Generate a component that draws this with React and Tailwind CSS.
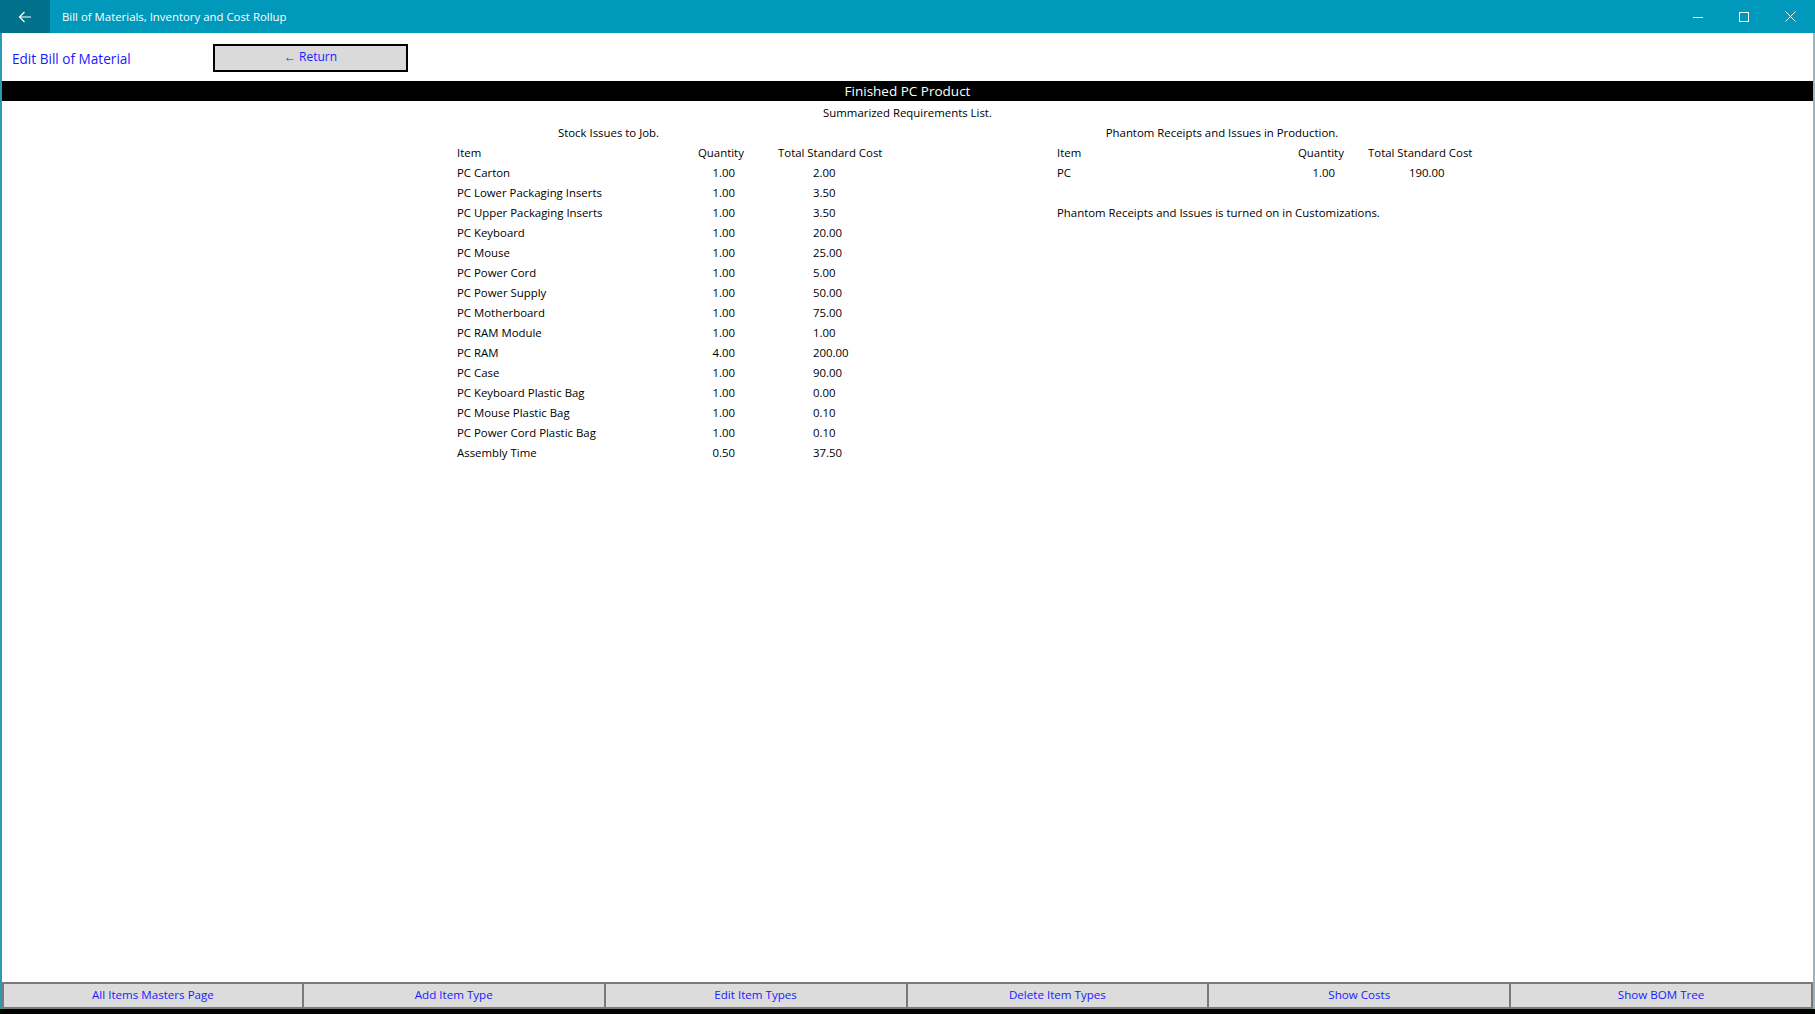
import React from 'react';

const stockIssues = [
  { item: 'PC Carton', qty: '1.00', cost: '2.00' },
  { item: 'PC Lower Packaging Inserts', qty: '1.00', cost: '3.50' },
  { item: 'PC Upper Packaging Inserts', qty: '1.00', cost: '3.50' },
  { item: 'PC Keyboard', qty: '1.00', cost: '20.00' },
  { item: 'PC Mouse', qty: '1.00', cost: '25.00' },
  { item: 'PC Power Cord', qty: '1.00', cost: '5.00' },
  { item: 'PC Power Supply', qty: '1.00', cost: '50.00' },
  { item: 'PC Motherboard', qty: '1.00', cost: '75.00' },
  { item: 'PC RAM Module', qty: '1.00', cost: '1.00' },
  { item: 'PC RAM', qty: '4.00', cost: '200.00' },
  { item: 'PC Case', qty: '1.00', cost: '90.00' },
  { item: 'PC Keyboard Plastic Bag', qty: '1.00', cost: '0.00' },
  { item: 'PC Mouse Plastic Bag', qty: '1.00', cost: '0.10' },
  { item: 'PC Power Cord Plastic Bag', qty: '1.00', cost: '0.10' },
  { item: 'Assembly Time', qty: '0.50', cost: '37.50' },
];

const phantoms = [{ item: 'PC', qty: '1.00', cost: '190.00' }];

const footerButtons = [
  'All Items Masters Page',
  'Add Item Type',
  'Edit Item Types',
  'Delete Item Types',
  'Show Costs',
  'Show BOM Tree',
];

// title bar with back button and window controls
const TitleBar = () => (
  <div className="h-[33px] bg-[#0099bc] flex items-center text-white shrink-0">
    <div className="w-[50px] h-full bg-[#00708b] flex items-center justify-center">
      <svg width="14" height="12" viewBox="0 0 14 12" fill="none" stroke="white" strokeWidth="1.2">
        <path d="M13 6H1.5M6.5 1L1.5 6l5 5" />
      </svg>
    </div>
    <span className="ml-[12px] text-[11.4px]">Bill of Materials, Inventory and Cost Rollup</span>
    <div className="ml-auto flex h-full pr-[2px]">
      <div className="w-[46px] h-full flex items-center justify-center">
        <svg width="10" height="10" viewBox="0 0 10 10" stroke="white" strokeWidth="1">
          <path d="M0 5.5h10" />
        </svg>
      </div>
      <div className="w-[46px] h-full flex items-center justify-center">
        <svg width="10" height="10" viewBox="0 0 10 10" fill="none" stroke="white" strokeWidth="1">
          <rect x="0.5" y="0.5" width="9" height="9" />
        </svg>
      </div>
      <div className="w-[46px] h-full flex items-center justify-center">
        <svg width="11" height="11" viewBox="0 0 11 11" stroke="white" strokeWidth="1">
          <path d="M0.5 0.5l10 10M10.5 0.5l-10 10" />
        </svg>
      </div>
    </div>
  </div>
);

const Row = ({ children, className = '' }) => (
  <div className={`h-[20px] flex items-center whitespace-nowrap ${className}`}>{children}</div>
);

export default function App() {
  return (
    <div className="w-[1815px] h-[1014px] flex flex-col bg-white font-['Open_Sans','Noto_Sans',sans-serif] overflow-hidden">
      <TitleBar />

      <div className="flex-1 flex flex-col border-l-2 border-r-2 border-l-[#2a9ab6] border-r-[#9fb3ba]">
        {/* Header */}
        <div className="h-[48px] flex items-start shrink-0">
          <div className="w-[211px] pl-[10px] pt-[13px]">
            <span className="text-[13.6px] text-[#1a1aff]">Edit Bill of Material</span>
          </div>
          <button className="mt-[11px] w-[195px] h-[28px] bg-[#dadada] border-2 border-black text-[12px] text-[#1a1aff] leading-none pb-[3px]">
            ← Return
          </button>
        </div>

        <div className="h-[20px] bg-black text-white text-[13.5px] flex items-center justify-center shrink-0 pt-[1px]">
          Finished PC Product
        </div>

        {/* Content */}
        <div className="flex-1 text-[11.4px] text-black pt-[2px]">
          <Row className="justify-center">Summarized Requirements List.</Row>

          <div className="flex">
            {/* Stock issues */}
            <div className="ml-[455px] w-[600px]">
              <Row className="w-[303px] justify-center">Stock Issues to Job.</Row>
              <Row>
                <span className="w-[241px]">Item</span>
                <span className="w-[80px]">Quantity</span>
                <span>Total Standard Cost</span>
              </Row>
              {stockIssues.map((r) => (
                <Row key={r.item}>
                  <span className="w-[241px]">{r.item}</span>
                  <span className="w-[80px]">
                    <span className="block w-[37px] text-right">{r.qty}</span>
                  </span>
                  <span className="pl-[35px]">{r.cost}</span>
                </Row>
              ))}
            </div>

            {/* Phantom */}
            <div className="w-[500px]">
              <Row className="w-[330px] justify-center">Phantom Receipts and Issues in Production.</Row>
              <Row>
                <span className="w-[241px]">Item</span>
                <span className="w-[70px]">Quantity</span>
                <span>Total Standard Cost</span>
              </Row>
              {phantoms.map((r) => (
                <Row key={r.item}>
                  <span className="w-[241px]">{r.item}</span>
                  <span className="w-[70px]">
                    <span className="block w-[37px] text-right">{r.qty}</span>
                  </span>
                  <span className="pl-[41px]">{r.cost}</span>
                </Row>
              ))}
              <Row className="mt-[20px]">Phantom Receipts and Issues is turned on in Customizations.</Row>
            </div>
          </div>
        </div>

        {/* Footer buttons */}
        <div className="h-[27px] grid grid-cols-6 shrink-0">
          {footerButtons.map((label, i) => (
            <button
              key={label}
              className={`bg-[#dcdcdc] border-y-2 border-r-2 border-[#7a7a7a] text-[11.6px] text-[#1a1aff] pb-[1px] ${i === 0 ? 'border-l-2' : ''}`}
            >
              {label}
            </button>
          ))}
        </div>
      </div>
      <div className="h-[5px] bg-black shrink-0" />
    </div>
  );
}
